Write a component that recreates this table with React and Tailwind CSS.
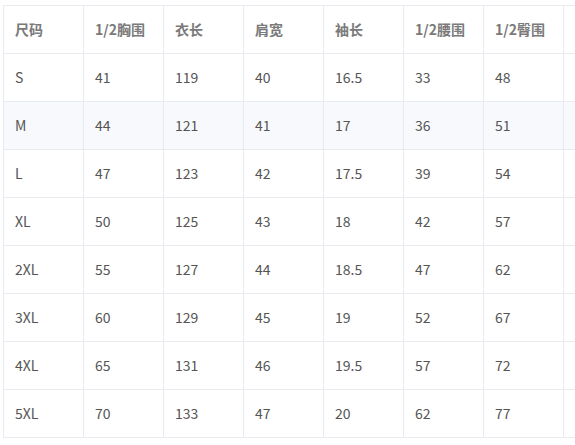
const headers = ["尺码", "1/2胸围", "衣长", "肩宽", "袖长", "1/2腰围", "1/2臀围", "建议体重"];

const rows = [
  ["S", "41", "119", "40", "16.5", "33", "48", ""],
  ["M", "44", "121", "41", "17", "36", "51", ""],
  ["L", "47", "123", "42", "17.5", "39", "54", ""],
  ["XL", "50", "125", "43", "18", "42", "57", ""],
  ["2XL", "55", "127", "44", "18.5", "47", "62", ""],
  ["3XL", "60", "129", "45", "19", "52", "67", ""],
  ["4XL", "65", "131", "46", "19.5", "57", "72", ""],
  ["5XL", "70", "133", "47", "20", "62", "77", ""],
];

export default function App() {
  return (
    <div className="w-[575px] h-[445px] overflow-hidden bg-white pl-[3px] pt-[5px] font-['Microsoft_YaHei','Noto_Sans_CJK_SC',sans-serif]">
      <table className="table-fixed border-collapse w-[641px]">
        <thead>
          <tr className="h-[48px]">
            {headers.map((h, i) => (
              <th
                key={i}
                className={`w-[80px] border border-[#e8ebef] px-[11px] text-left text-[14px] font-bold whitespace-nowrap ${
                  i === 7 ? "text-[#f5c9a0]" : "text-[#7a7a7a]"
                }`}
              >
                {h}
              </th>
            ))}
          </tr>
        </thead>
        <tbody>
          {rows.map((r, ri) => (
            <tr key={ri} className={`h-[48px] ${ri === 1 ? "bg-[#f7f9fc]" : ""}`}>
              {r.map((c, ci) => (
                <td
                  key={ci}
                  className="border border-[#e8ebef] px-[11px] text-left text-[14px] text-[#555]"
                >
                  {c}
                </td>
              ))}
            </tr>
          ))}
        </tbody>
      </table>
    </div>
  );
}
